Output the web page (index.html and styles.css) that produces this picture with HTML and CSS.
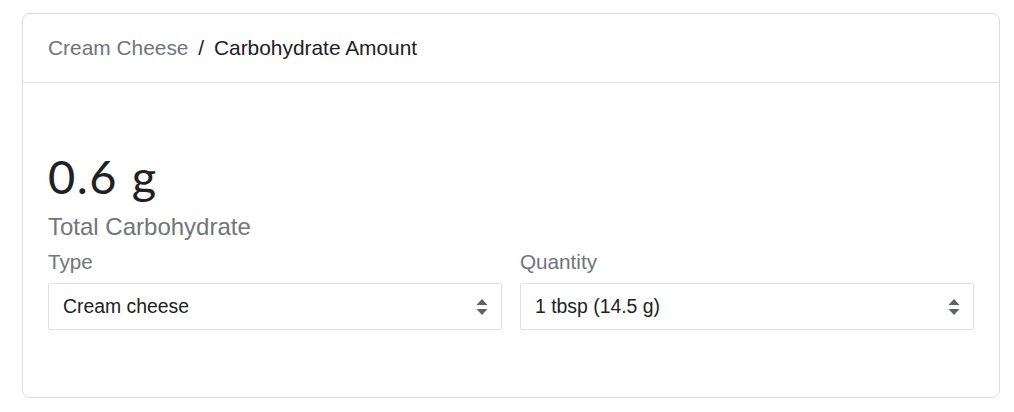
FILE: index.html
```html
<!DOCTYPE html>
<html lang="en">

<head>
    <meta charset="UTF-8">
    <meta name="viewport" content="width=device-width, initial-scale=1.0">
    <title>Carbohydrate Amount</title>
    <link rel="stylesheet" href="styles.css">
</head>

<body>
    <div class="card">
        <div class="card-header">
            <span class="crumb">Cream Cheese</span>
            <span class="sep">/</span>
            <span class="current">Carbohydrate Amount</span>
        </div>
        <div class="card-body">
            <div class="amount">0.6 g</div>
            <div class="amount-label">Total Carbohydrate</div>
            <div class="fields">
                <div class="field">
                    <label class="field-label">Type</label>
                    <div class="select">
                        <span>Cream cheese</span>
                        <svg class="arrows" width="12" height="18" viewBox="0 0 12 18">
                            <path d="M6 1 L11.5 7 H0.5 Z" fill="#5f6368" />
                            <path d="M6 17 L11.5 11 H0.5 Z" fill="#5f6368" />
                        </svg>
                    </div>
                </div>
                <div class="field">
                    <label class="field-label">Quantity</label>
                    <div class="select">
                        <span>1 tbsp (14.5 g)</span>
                        <svg class="arrows" width="12" height="18" viewBox="0 0 12 18">
                            <path d="M6 1 L11.5 7 H0.5 Z" fill="#5f6368" />
                            <path d="M6 17 L11.5 11 H0.5 Z" fill="#5f6368" />
                        </svg>
                    </div>
                </div>
            </div>
        </div>
    </div>
</body>

</html>
```

FILE: styles.css
```css
body {
    margin: 0;
    padding: 13px 14px 14px 22px;
    background: #fff;
    font-family: "Liberation Sans", Arial, sans-serif;
}

.card {
    border: 1px solid #dadce0;
    border-radius: 8px;
    height: 385px;
    box-sizing: border-box;
}

.card-header {
    height: 69px;
    box-sizing: border-box;
    padding: 22px 25px 0;
    border-bottom: 1px solid #e3e3e3;
    font-size: 20.9px;
    line-height: 24px;
    color: #202124;
}

.crumb {
    color: #70757a;
}

.sep {
    margin: 0 4px;
}

.card-body {
    padding: 65px 25px 0;
}

.amount {
    font-family: Lato, "Open Sans", sans-serif;
    font-size: 47px;
    line-height: 56px;
    letter-spacing: 1.5px;
    color: #202124;
}

.amount-label {
    font-size: 24px;
    line-height: 28px;
    color: #70757a;
    margin-top: 9px;
}

.fields {
    display: flex;
    gap: 18px;
    margin-top: 9px;
}

.field {
    flex: 1;
}

.field-label {
    display: block;
    font-size: 20.7px;
    line-height: 24px;
    color: #70757a;
    margin-bottom: 9px;
}

.select {
    display: flex;
    align-items: center;
    justify-content: space-between;
    height: 47px;
    box-sizing: border-box;
    padding: 0 13px 0 14px;
    border: 1px solid #dfe1e5;
    border-radius: 2px;
    font-size: 19.4px;
    color: #202124;
}
```
